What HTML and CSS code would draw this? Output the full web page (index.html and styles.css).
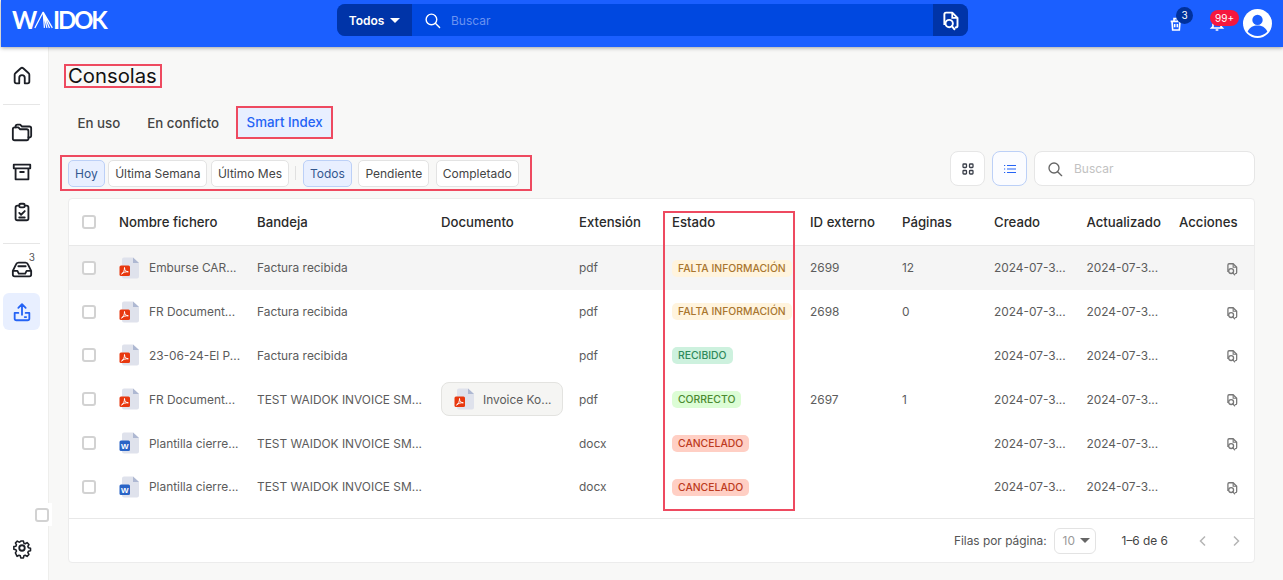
FILE: index.html
```html
<!DOCTYPE html>
<html lang="es">
<head>
    <meta charset="UTF-8">
    <meta name="viewport" content="width=device-width, initial-scale=1.0">
    <title>Consolas</title>
    <link rel="stylesheet" href="styles.css">
</head>
<body>

    <!-- iconos reutilizados -->
    <svg class="sprite" xmlns="http://www.w3.org/2000/svg">
        <symbol id="i-pdf" viewBox="0 0 20 24">
            <path d="M5 1.500h9l6 5.500v13.500a2 2 0 0 1-2 2H5a2 2 0 0 1-2-2v-17a2 2 0 0 1 2-2z" fill="#dfe2ec"/>
            <path d="M14 1.500l6 5.500h-6z" fill="#aeb8d2"/>
            <rect x="0.500" y="9.500" width="10.500" height="10.500" rx="1.500" fill="#e8380f"/>
            <path d="M2.500 18c2-1 3-3.500 3-6.500 0 3 1.500 4 3.800 4.300-2.500-.2-4.800.4-6.800 2.200z" fill="none" stroke="#fff" stroke-width="1"/>
        </symbol>
        <symbol id="i-doc" viewBox="0 0 20 24">
            <path d="M5 1.500h9l6 5.500v13.500a2 2 0 0 1-2 2H5a2 2 0 0 1-2-2v-17a2 2 0 0 1 2-2z" fill="#dfe2ec"/>
            <path d="M14 1.500l6 5.500h-6z" fill="#aeb8d2"/>
            <rect x="0.500" y="9.500" width="10.500" height="10.500" rx="1.500" fill="#2a64c6"/>
            <text x="5.750" y="17.800" text-anchor="middle" class="word-w">W</text>
        </symbol>
        <symbol id="i-find" viewBox="0 0 24 24">
            <path d="M5 17V5a2 2 0 0 1 2-2h7l6 6v9a2 2 0 0 1-2 2h-1" fill="none" stroke="currentColor" stroke-width="2.200" stroke-linejoin="round"/>
            <path d="M14 3v6h6" fill="none" stroke="currentColor" stroke-width="2"/>
            <circle cx="10.500" cy="15.500" r="4.200" fill="none" stroke="currentColor" stroke-width="2.200"/>
            <path d="M13.500 18.500l3 3.500" stroke="currentColor" stroke-width="2.200" stroke-linecap="round"/>
        </symbol>
        <symbol id="i-search" viewBox="0 0 24 24">
            <circle cx="10.500" cy="10.500" r="7.500" fill="none" stroke="currentColor" stroke-width="2"/>
            <path d="M16 16l6 6" stroke="currentColor" stroke-width="2" stroke-linecap="round"/>
        </symbol>
    </svg>

    <!-- barra superior -->
    <header class="topbar">
        <div class="logo" aria-label="WAIDOK">
            <span>W</span>
            <svg class="logo-fan" viewBox="0 0 24 20" aria-hidden="true">
                <path d="M1 19.500L11 .5M11 .5l1.500 19M11 .5l4.500 19M11 .5l7.500 19M11 .5l11 19" fill="none" stroke="#fff" stroke-width="1.500"/>
            </svg>
            <span>IDOK</span>
        </div>
        <div class="global-search">
            <div class="scope">Todos <i class="caret"></i></div>
            <svg class="search-icon"><use href="#i-search"/></svg>
            <span class="search-hint">Buscar</span>
            <div class="search-doc"><svg class="search-doc-icon"><use href="#i-find"/></svg></div>
        </div>
        <div class="top-actions">
            <div class="top-icon">
                <svg viewBox="0 0 24 24" fill="none" stroke="#fff" stroke-width="2.400"><path d="M4 8h16M6 8l1 13h10l1-13M9 8V4h6v4M10 12v5M14 12v5"/></svg>
                <span class="count count-dark">3</span>
            </div>
            <div class="top-icon top-bell">
                <svg viewBox="0 0 24 24" fill="none" stroke="#fff" stroke-width="2.400"><path d="M6 16V10a6 6 0 0 1 12 0v6l2 2H4zM10 21h4"/></svg>
                <span class="count count-red">99+</span>
            </div>
            <svg class="avatar" viewBox="0 0 28 28">
                <circle cx="14" cy="14" r="14" fill="#fff"/>
                <circle cx="14" cy="10.500" r="5" fill="#1b5fff"/>
                <path d="M4.500 22c2-4.500 5.500-6 9.500-6s7.500 1.500 9.500 6c-2.500 2.700-5.800 4-9.500 4s-7-1.300-9.500-4z" fill="#1b5fff"/>
            </svg>
        </div>
    </header>

    <div class="layout">
        <!-- menu lateral -->
        <nav class="sidebar">
            <a class="side-item">
                <svg viewBox="0 0 24 24"><path d="M9 20v-6a3 3 0 0 1 6 0v6h3a2 2 0 0 0 2-2v-7.500a2 2 0 0 0-.7-1.500l-6-5.500a2 2 0 0 0-2.600 0l-6 5.500a2 2 0 0 0-.7 1.500V18a2 2 0 0 0 2 2z"/></svg>
            </a>
            <hr class="side-sep">
            <a class="side-item">
                <svg viewBox="0 0 24 24"><path d="M2 9a2 2 0 0 1 2-2h4l2 2h7a2 2 0 0 1 2 2v8a2 2 0 0 1-2 2H4a2 2 0 0 1-2-2z"/><path d="M5 7V6a2 2 0 0 1 2-2h3l2 2h8a2 2 0 0 1 2 2v8a2 2 0 0 1-3 1.700"/></svg>
            </a>
            <a class="side-item">
                <svg viewBox="0 0 24 24"><path d="M3 4h18v4H3zM5 8v12h14V8M10 12h4"/></svg>
            </a>
            <a class="side-item">
                <svg viewBox="0 0 24 24"><path d="M9 5H7a2 2 0 0 0-2 2v12a2 2 0 0 0 2 2h10a2 2 0 0 0 2-2V7a2 2 0 0 0-2-2h-2"/><rect x="9" y="3" width="6" height="4" rx="1.500"/><path d="M9 13l2 2 4-4M9 18h6"/></svg>
            </a>
            <hr class="side-sep side-sep-low">
            <a class="side-item side-inbox">
                <svg viewBox="0 0 24 24"><path d="M2 14l3.500-7a3 3 0 0 1 2.700-2h7.600a3 3 0 0 1 2.700 2L22 14v4a2 2 0 0 1-2 2H4a2 2 0 0 1-2-2zM2 14h5l1.500 3h7L17 14h5M8 9h8"/></svg>
                <span class="side-count">3</span>
            </a>
            <a class="side-item side-active">
                <svg viewBox="0 0 24 24"><path d="M12 15V4M8 7.500L12 3.500l4 4M8 13H4v6a2 2 0 0 0 2 2h12a2 2 0 0 0 2-2v-6h-4M15 17.500h1.500"/></svg>
            </a>
            <a class="side-item side-settings">
                <svg viewBox="0 0 24 24"><circle cx="12" cy="12" r="3"/><path d="M10.300 3h3.400l.6 2.700 1.700.7 2.400-1.400 2.400 2.400-1.400 2.400.7 1.700 2.700.6v3.400l-2.700.6-.7 1.700 1.400 2.400-2.400 2.400-2.400-1.400-1.700.7-.6 2.700h-3.400l-.6-2.700-1.700-.7-2.400 1.400L3.400 18.200l1.400-2.400-.7-1.700L1.400 13.500v-3.400l2.700-.6.7-1.700L3.400 5.400 5.800 3l2.400 1.400 1.700-.7z" transform="translate(1.900 1.900) scale(.85)"/></svg>
            </a>
        </nav>
        <div class="side-check"><span class="check"></span></div>

        <!-- contenido -->
        <main class="content">
            <h1 class="page-title mark">Consolas</h1>

            <div class="tabs">
                <div class="tab">En uso</div>
                <div class="tab">En conficto</div>
                <div class="tab tab-active mark">Smart Index</div>
            </div>

            <div class="toolbar">
                <div class="filters mark">
                    <div class="chip-group">
                        <button class="chip chip-on">Hoy</button>
                        <button class="chip">Última Semana</button>
                        <button class="chip">Último Mes</button>
                    </div>
                    <span class="chip-sep"></span>
                    <div class="chip-group chip-group-wide">
                        <button class="chip chip-on">Todos</button>
                        <button class="chip">Pendiente</button>
                        <button class="chip">Completado</button>
                    </div>
                </div>
                <div class="tools">
                    <button class="tool">
                        <svg viewBox="0 0 12 12" fill="none" stroke="#3a3f4a" stroke-width="1.300"><rect x="1" y="1" width="3.500" height="3.500" rx=".8"/><rect x="7.500" y="1" width="3.500" height="3.500" rx=".8"/><rect x="1" y="7.500" width="3.500" height="3.500" rx=".8"/><rect x="7.500" y="7.500" width="3.500" height="3.500" rx=".8"/></svg>
                    </button>
                    <button class="tool tool-on">
                        <svg viewBox="0 0 12 12" fill="none" stroke="#2463f5" stroke-width="1.200"><path d="M3 2.500h9M3 6h9M3 9.500h9M0 2.500h1.200M0 6h1.200M0 9.500h1.200"/></svg>
                    </button>
                    <div class="table-search">
                        <svg class="table-search-icon"><use href="#i-search"/></svg>
                        <span>Buscar</span>
                    </div>
                </div>
            </div>

            <section class="card">
                <table class="grid">
                    <colgroup>
                        <col class="c-check"><col class="c-name"><col class="c-tray"><col class="c-doc"><col class="c-ext"><col class="c-state"><col class="c-id"><col class="c-pages"><col class="c-date"><col class="c-date"><col>
                    </colgroup>
                    <thead>
                        <tr>
                            <th class="cell-check"><span class="check"></span></th>
                            <th>Nombre fichero</th>
                            <th>Bandeja</th>
                            <th>Documento</th>
                            <th>Extensión</th>
                            <th>Estado</th>
                            <th>ID externo</th>
                            <th>Páginas</th>
                            <th>Creado</th>
                            <th>Actualizado</th>
                            <th>Acciones</th>
                        </tr>
                    </thead>
                    <tbody>
                        <tr class="row-hover">
                            <td class="cell-check"><span class="check"></span></td>
                            <td><div class="file"><svg class="file-icon"><use href="#i-pdf"/></svg>Emburse CAR...</div></td>
                            <td>Factura recibida</td>
                            <td></td>
                            <td>pdf</td>
                            <td><span class="badge badge-warn">FALTA INFORMACIÓN</span></td>
                            <td>2699</td>
                            <td>12</td>
                            <td>2024-07-3...</td>
                            <td>2024-07-3...</td>
                            <td class="cell-action"><svg class="action-icon"><use href="#i-find"/></svg></td>
                        </tr>
                        <tr>
                            <td class="cell-check"><span class="check"></span></td>
                            <td><div class="file"><svg class="file-icon"><use href="#i-pdf"/></svg>FR Document...</div></td>
                            <td>Factura recibida</td>
                            <td></td>
                            <td>pdf</td>
                            <td><span class="badge badge-warn">FALTA INFORMACIÓN</span></td>
                            <td>2698</td>
                            <td>0</td>
                            <td>2024-07-3...</td>
                            <td>2024-07-3...</td>
                            <td class="cell-action"><svg class="action-icon"><use href="#i-find"/></svg></td>
                        </tr>
                        <tr>
                            <td class="cell-check"><span class="check"></span></td>
                            <td><div class="file"><svg class="file-icon"><use href="#i-pdf"/></svg>23-06-24-El P...</div></td>
                            <td>Factura recibida</td>
                            <td></td>
                            <td>pdf</td>
                            <td><span class="badge badge-info">RECIBIDO</span></td>
                            <td></td>
                            <td></td>
                            <td>2024-07-3...</td>
                            <td>2024-07-3...</td>
                            <td class="cell-action"><svg class="action-icon"><use href="#i-find"/></svg></td>
                        </tr>
                        <tr>
                            <td class="cell-check"><span class="check"></span></td>
                            <td><div class="file"><svg class="file-icon"><use href="#i-pdf"/></svg>FR Document...</div></td>
                            <td>TEST WAIDOK INVOICE SM...</td>
                            <td><div class="doc-chip"><svg class="file-icon"><use href="#i-pdf"/></svg>Invoice Ko...</div></td>
                            <td>pdf</td>
                            <td><span class="badge badge-ok">CORRECTO</span></td>
                            <td>2697</td>
                            <td>1</td>
                            <td>2024-07-3...</td>
                            <td>2024-07-3...</td>
                            <td class="cell-action"><svg class="action-icon"><use href="#i-find"/></svg></td>
                        </tr>
                        <tr>
                            <td class="cell-check"><span class="check"></span></td>
                            <td><div class="file"><svg class="file-icon"><use href="#i-doc"/></svg>Plantilla cierre...</div></td>
                            <td>TEST WAIDOK INVOICE SM...</td>
                            <td></td>
                            <td>docx</td>
                            <td><span class="badge badge-bad">CANCELADO</span></td>
                            <td></td>
                            <td></td>
                            <td>2024-07-3...</td>
                            <td>2024-07-3...</td>
                            <td class="cell-action"><svg class="action-icon"><use href="#i-find"/></svg></td>
                        </tr>
                        <tr>
                            <td class="cell-check"><span class="check"></span></td>
                            <td><div class="file"><svg class="file-icon"><use href="#i-doc"/></svg>Plantilla cierre...</div></td>
                            <td>TEST WAIDOK INVOICE SM...</td>
                            <td></td>
                            <td>docx</td>
                            <td><span class="badge badge-bad">CANCELADO</span></td>
                            <td></td>
                            <td></td>
                            <td>2024-07-3...</td>
                            <td>2024-07-3...</td>
                            <td class="cell-action"><svg class="action-icon"><use href="#i-find"/></svg></td>
                        </tr>
                    </tbody>
                </table>

                <div class="pager">
                    <span>Filas por página:</span>
                    <div class="page-size">10 <i class="caret caret-gray"></i></div>
                    <span class="page-range">1–6 de 6</span>
                    <svg class="page-arrow" viewBox="0 0 12 12"><path d="M8 1.500L3.500 6 8 10.500"/></svg>
                    <svg class="page-arrow" viewBox="0 0 12 12"><path d="M4 1.500L8.500 6 4 10.500"/></svg>
                </div>

                <!-- recuadro sobre la columna Estado -->
                <div class="state-mark"></div>
            </section>
        </main>
    </div>

</body>
</html>
```

FILE: styles.css
```css
/* base */
body {
    font-family: Inter, "Liberation Sans", sans-serif;
    background-color: #f8f8f7;
    color: #333;
    margin: 0;
    height: 580px;
    overflow: hidden;
}

.sprite {
    display: none;
}

.word-w {
    font: 700 8px "Liberation Sans", sans-serif;
    fill: #fff;
}

/* barra superior */
.topbar {
    height: 47px;
    margin-left: 1px;
    padding: 0 11px;
    background-color: #1b5fff;
    display: flex;
    align-items: center;
    box-shadow: 0px 1px 4px rgba(0, 0, 0, 0.35);
    position: relative;
    z-index: 10;
}

.logo {
    width: 325px;
    display: flex;
    align-items: center;
    color: #fff;
    font-family: Lato, sans-serif;
    font-size: 24px;
    font-weight: 700;
    letter-spacing: -2.200px;
    line-height: 1;
    margin-top: -7px;
}

.logo-fan {
    width: 20px;
    height: 18px;
    margin: 0 -1px 0 -1px;
}

.global-search {
    width: 631px;
    height: 32px;
    margin-top: -7px;
    background: #0048e0;
    border-radius: 8px;
    display: flex;
    align-items: center;
    overflow: hidden;
}

.scope {
    width: 75px;
    height: 100%;
    background: #0034a8;
    color: #fff;
    font-size: 12px;
    font-weight: 600;
    display: flex;
    align-items: center;
    justify-content: center;
    gap: 6px;
}

.caret {
    width: 0;
    height: 0;
    border-left: 5px solid transparent;
    border-right: 5px solid transparent;
    border-top: 5px solid #fff;
}

.caret-gray {
    border-top-color: #666;
}

.search-icon {
    width: 17px;
    height: 17px;
    margin-left: 12px;
    color: #fff;
}

.search-hint {
    margin-left: 10px;
    flex: 1;
    font-size: 12px;
    color: #6b93f0;
}

.search-doc {
    width: 35px;
    height: 100%;
    background: #0034a8;
    display: flex;
    align-items: center;
    justify-content: center;
}

.search-doc-icon {
    width: 21px;
    height: 21px;
    color: #fff;
}

.top-actions {
    flex: 1;
    display: flex;
    align-items: center;
    justify-content: flex-end;
}

.top-icon {
    width: 16px;
    height: 16px;
    position: relative;
}

.top-icon svg {
    display: block;
    width: 16px;
    height: 16px;
}

.top-bell {
    margin-left: 25px;
    margin-right: 18px;
}

.count {
    position: absolute;
    color: #fff;
    font-size: 10px;
    text-align: center;
}

.count-dark {
    top: -9px;
    left: 8px;
    width: 17px;
    height: 17px;
    line-height: 17px;
    border-radius: 50%;
    background: #00319c;
}

.count-red {
    top: -6px;
    left: 1px;
    width: 29px;
    height: 16px;
    line-height: 16px;
    border-radius: 8px;
    background: #f5173e;
}

.avatar {
    width: 29px;
    height: 29px;
}

/* menu lateral */
.layout {
    display: flex;
    height: 533px;
    position: relative;
}

.sidebar {
    width: 49px;
    flex: none;
    box-sizing: border-box;
    padding: 9px 0 0 3px;
    background: #fff;
    border-right: 1px solid #eeeeec;
    display: flex;
    flex-direction: column;
    align-items: flex-start;
}

.side-item {
    width: 37px;
    height: 40px;
    display: flex;
    align-items: center;
    justify-content: center;
    position: relative;
    flex: none;
}

.side-item svg {
    width: 22px;
    height: 22px;
    fill: none;
    stroke: #1c1f26;
    stroke-width: 2;
    stroke-linejoin: round;
    stroke-linecap: round;
}

.side-sep {
    width: 37px;
    margin: 8px 0 7px;
    border: none;
    border-top: 1px solid #e6e6e6;
}

.side-sep-low {
    margin: 11px 0 5px;
}

.side-count {
    position: absolute;
    top: 2px;
    right: 5px;
    font-size: 10px;
    color: #555;
}

.side-active {
    margin-top: 4px;
    height: 37px;
    background: #e8efff;
    border-radius: 6px;
}

.side-active svg {
    stroke: #2463f5;
}

.side-settings {
    margin-top: auto;
    margin-bottom: 12px;
}

.side-check {
    position: absolute;
    left: 32px;
    top: 456px;
    width: 20px;
    height: 23px;
    background: #fff;
    display: flex;
    align-items: center;
    justify-content: center;
}

.check {
    display: block;
    width: 10px;
    height: 10px;
    border: 2px solid #d2d2d2;
    border-radius: 3px;
    background: #fff;
}

/* contenido */
.content {
    flex: 1;
    min-width: 0;
    padding: 17px 28px 0 19px;
}

.mark {
    border: 2px solid #ee4a60;
}

.page-title {
    display: inline-block;
    margin: 0 0 0 -4px;
    padding: 0 3px 0 2px;
    font-size: 20.300px;
    font-weight: 400;
    line-height: 20px;
    color: #111;
    vertical-align: top;
}

.tabs {
    display: flex;
    align-items: center;
    height: 33px;
    margin-top: 18px;
    margin-left: -4px;
}

.tab {
    padding: 0 13.500px;
    font-size: 13.300px;
    font-weight: 500;
    color: #444;
    white-space: nowrap;
}

.tab-active {
    box-sizing: border-box;
    height: 33px;
    line-height: 29px;
    margin-left: 3.500px;
    padding: 0 8.500px;
    background: #e8efff;
    color: #2463f5;
}

.toolbar {
    display: flex;
    justify-content: space-between;
    align-items: flex-start;
    margin-top: 12px;
}

.filters {
    display: flex;
    align-items: center;
    box-sizing: border-box;
    height: 36px;
    width: 472px;
    margin: 4px 0 0 -8px;
    padding: 0 6px;
}

.chip-group {
    display: flex;
    gap: 3.500px;
}

.chip-group-wide {
    gap: 6.500px;
}

.chip {
    height: 27px;
    padding: 0 6px;
    font-family: inherit;
    font-size: 12px;
    color: #444;
    background: #fff;
    border: 1px solid #e3e3e3;
    border-radius: 5px;
    white-space: nowrap;
}

.chip-on {
    background: #e8efff;
    border-color: #bcd0f7;
    color: #33578f;
}

.chip-sep {
    width: 1px;
    height: 14px;
    margin: 0 6.500px;
    background: #e0e0e0;
}

.tools {
    display: flex;
    gap: 7px;
}

.tool {
    box-sizing: border-box;
    width: 35px;
    height: 35px;
    padding: 0;
    background: #fff;
    border: 1px solid #e6e6e6;
    border-radius: 8px;
    display: flex;
    align-items: center;
    justify-content: center;
}

.tool svg {
    width: 12px;
    height: 12px;
}

.tool-on {
    background: #fbfcff;
    border-color: #bcd0f7;
}

.table-search {
    box-sizing: border-box;
    width: 221px;
    height: 35px;
    padding-left: 12px;
    background: #fff;
    border: 1px solid #e6e6e6;
    border-radius: 8px;
    display: flex;
    align-items: center;
    gap: 11px;
    font-size: 12px;
    color: #c2c2c2;
}

.table-search-icon {
    width: 16px;
    height: 16px;
    color: #666;
}

/* tabla */
.card {
    position: relative;
    margin-top: 7px;
    background: #fff;
    border: 1px solid #ececec;
    border-radius: 4px;
    box-sizing: border-box;
    height: 365px;
    display: flex;
    flex-direction: column;
}

.grid {
    width: 100%;
    border-collapse: collapse;
    table-layout: fixed;
}

.c-check { width: 38px; }
.c-name { width: 138px; }
.c-tray { width: 184px; }
.c-doc { width: 138px; }
.c-ext { width: 93px; }
.c-state { width: 138px; }
.c-id { width: 92px; }
.c-pages { width: 92px; }
.c-date { width: 92.500px; }

.grid th {
    height: 46px;
    padding: 0 12px;
    text-align: left;
    font-size: 13.200px;
    font-weight: 500;
    color: #2a2a2a;
    white-space: nowrap;
    border-bottom: 1px solid #e8e8e8;
}

.grid td {
    height: 43.800px;
    padding: 0 12px;
    font-size: 11.900px;
    color: #5c5c5c;
    white-space: nowrap;
}

.grid .cell-check {
    padding: 0 0 0 13px;
}

.row-hover td {
    background: #f5f5f5;
}

.file {
    display: flex;
    align-items: center;
    gap: 10px;
}

.file-icon {
    width: 20px;
    height: 24px;
    flex: none;
}

.doc-chip {
    box-sizing: border-box;
    width: 122px;
    height: 34px;
    padding-left: 12px;
    display: flex;
    align-items: center;
    gap: 9px;
    background: #f5f5f3;
    border: 1px solid #e3e3e0;
    border-radius: 8px;
}

.badge {
    display: inline-block;
    padding: 0 6px;
    height: 17px;
    line-height: 17px;
    border-radius: 5px;
    font-size: 10.400px;
    font-weight: 500;
    vertical-align: middle;
}

.badge-warn { background: #fff4de; color: #a9762f; }
.badge-info { background: #cdf1de; color: #2f8a5b; }
.badge-ok { background: #dcfdd5; color: #4b8a30; }
.badge-bad { background: #ffcfc4; color: #bd3a20; }

.cell-action {
    text-align: right;
}

.action-icon {
    width: 14px;
    height: 14px;
    color: #777;
    vertical-align: middle;
    margin-right: 3px;
}

.pager {
    box-sizing: border-box;
    height: 44px;
    margin-top: auto;
    display: flex;
    align-items: center;
    justify-content: flex-end;
    padding-right: 2px;
    border-top: 1px solid #e8e8e8;
    font-size: 11.900px;
    color: #555;
}

.page-size {
    box-sizing: border-box;
    width: 42px;
    height: 26px;
    margin-left: 7px;
    padding-left: 8px;
    border: 1px solid #e3e3e3;
    border-radius: 6px;
    display: flex;
    align-items: center;
    gap: 5px;
    color: #999;
}

.page-range {
    margin: 0 18px 0 26px;
    color: #444;
}

.page-arrow {
    width: 12px;
    height: 12px;
    margin: 0 10.500px;
    fill: none;
    stroke: #b5b5b5;
    stroke-width: 1.500;
}

.state-mark {
    position: absolute;
    left: 594px;
    top: 12px;
    width: 128px;
    height: 296px;
    border: 2px solid #ee4a60;
}
```
